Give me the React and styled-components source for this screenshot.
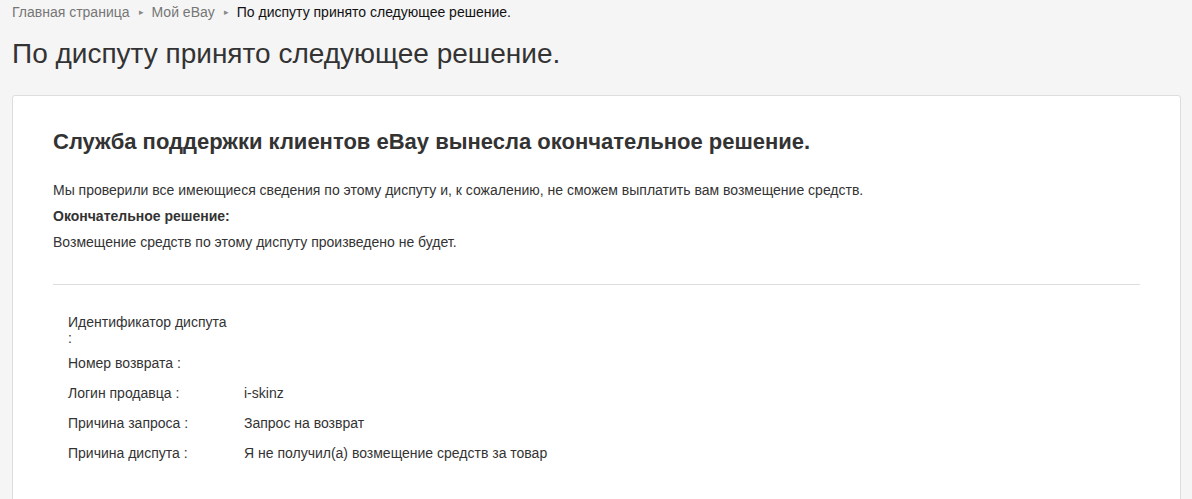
import React from "react";
import styled, {createGlobalStyle} from "styled-components";

const GlobalStyle = createGlobalStyle`
  html, body {
    margin: 0;
    padding: 0;
    background: #f5f5f5;
    font-family: Arial, "Liberation Sans", Helvetica, sans-serif;
    color: #333;
  }
`;

const details = [
    {label: "Идентификатор диспута :", value: ""},
    {label: "Номер возврата :", value: ""},
    {label: "Логин продавца :", value: "i-skinz"},
    {label: "Причина запроса :", value: "Запрос на возврат"},
    {label: "Причина диспута :", value: "Я не получил(а) возмещение средств за товар"},
];

function App() {
    return (
        <Page.Wrapper>
            <GlobalStyle/>
            <Page.Breadcrumbs>
                <Page.Crumb href="#">Главная страница</Page.Crumb>
                <Page.Sep>&#9656;</Page.Sep>
                <Page.Crumb href="#">Мой eBay</Page.Crumb>
                <Page.Sep>&#9656;</Page.Sep>
                <Page.Crumb $current>По диспуту принято следующее решение.</Page.Crumb>
            </Page.Breadcrumbs>

            <Page.Title>По диспуту принято следующее решение.</Page.Title>

            <Page.Card>
                <Page.Heading>Служба поддержки клиентов eBay вынесла окончательное решение.</Page.Heading>
                <Page.Text>Мы проверили все имеющиеся сведения по этому диспуту и, к сожалению, не сможем выплатить вам возмещение средств.</Page.Text>
                <Page.Text $bold>Окончательное решение:</Page.Text>
                <Page.Text>Возмещение средств по этому диспуту произведено не будет.</Page.Text>

                <Page.Divider/>

                <Page.Details>
                    {details.map((row) => (
                        <Page.Row key={row.label}>
                            <Page.Label>{row.label}</Page.Label>
                            <Page.Value>{row.value}</Page.Value>
                        </Page.Row>
                    ))}
                </Page.Details>
            </Page.Card>
        </Page.Wrapper>
    );
}

const Page = {
    Wrapper: styled.main`
      padding: 0 11px 0 12px;
      min-height: 499px;
      box-sizing: border-box;
    `,

    Breadcrumbs: styled.nav`
      display: flex;
      align-items: center;
      height: 24px;
      font-size: 14px;
    `,

    Crumb: styled.a`
      color: ${(p) => (p.$current ? "#111" : "#767676")};
      text-decoration: none;
    `,

    Sep: styled.span`
      color: #888;
      font-size: 9px;
      margin: 0 8px 0 9px;
    `,

    Title: styled.h1`
      margin: 0;
      padding: 14px 0 0;
      height: 57px;
      font-size: 28px;
      font-weight: normal;
      line-height: 32px;
      color: #333;
    `,

    Card: styled.section`
      background: #fff;
      border: 1px solid #ddd;
      border-radius: 3px;
      padding: 28px 40px 40px 40px;
      min-height: 420px;
      box-sizing: border-box;
    `,

    Heading: styled.h2`
      margin: 0 0 17px;
      font-size: 22px;
      font-weight: bold;
      line-height: 36px;
      color: #333;
    `,

    Text: styled.p`
      margin: 0;
      font-size: 14px;
      line-height: 26px;
      font-weight: ${(p) => (p.$bold ? "bold" : "normal")};
      color: #333;
    `,

    Divider: styled.hr`
      border: none;
      border-top: 1px solid #ddd;
      margin: 29px 0 29px;
    `,

    Details: styled.div`
      display: flex;
      flex-direction: column;
      gap: 14px;
      padding-left: 15px;
    `,

    Row: styled.div`
      display: grid;
      grid-template-columns: 160px 1fr;
      column-gap: 16px;
      font-size: 14px;
      line-height: 16px;
      color: #333;

      &:first-child {
        margin-bottom: -5px;
      }
    `,

    Label: styled.div``,

    Value: styled.div``,
};

export default App;
